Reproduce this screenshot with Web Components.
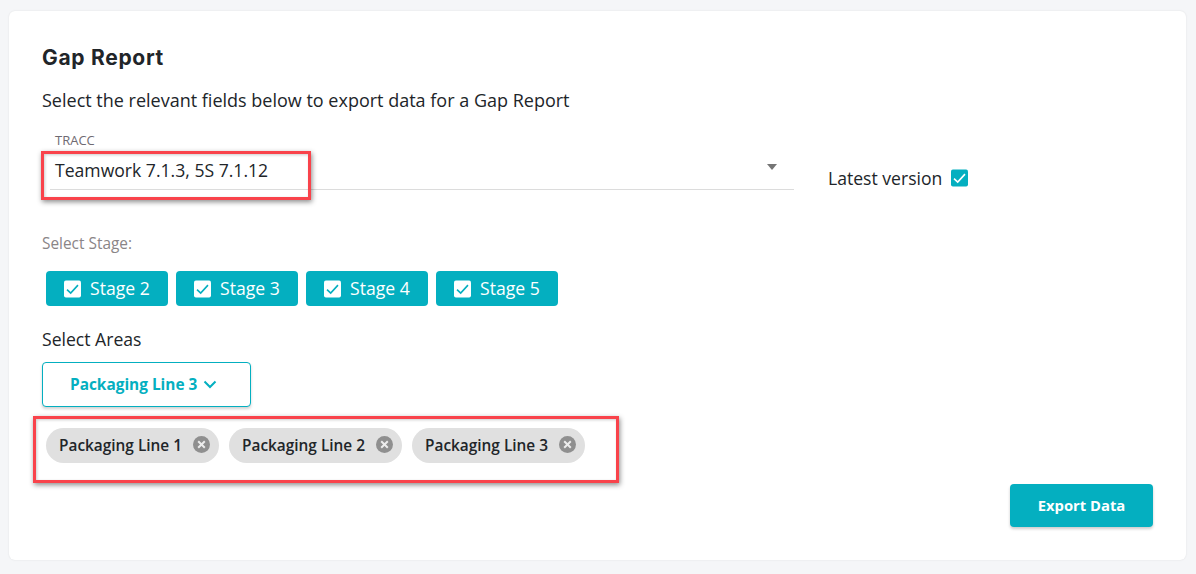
<!DOCTYPE html>
<html>
<head>
<meta charset="utf-8">
<title>Gap Report</title>
<style>
    html, body { margin: 0; padding: 0; height: 100%; }
    body { background: #f5f6f8; font-family: "Open Sans", sans-serif; color: #212529; overflow: hidden; }
</style>
</head>
<body>
<gap-report></gap-report>
<script>
const CHECK = `<svg viewBox="0 0 18 18" width="17" height="18"><rect width="18" height="18" rx="2" fill="var(--box, #fff)"/><path d="M3.2 9.6l3.9 3.7 7.7-8.4" fill="none" stroke="var(--tick, #04afc0)" stroke-width="1.7"/></svg>`;

class StageChip extends HTMLElement {
    connectedCallback() {
        this.attachShadow({ mode: 'open' });
        this.shadowRoot.innerHTML = `
            <style>
                :host {
                    display: inline-flex;
                    align-items: center;
                    gap: 9px;
                    width: 121.5px;
                    height: 35px;
                    box-sizing: border-box;
                    padding-left: 18px;
                    background: #04afc0;
                    border-radius: 4px;
                    color: #fff;
                    font-size: 17.6px;
                }
                svg { display: block; }
                span { display: block; margin-top: -1px; }
            </style>
            ${CHECK}<span><slot></slot></span>
        `;
    }
}

class AreaTag extends HTMLElement {
    connectedCallback() {
        this.attachShadow({ mode: 'open' });
        this.shadowRoot.innerHTML = `
            <style>
                :host {
                    display: inline-flex;
                    align-items: center;
                    justify-content: space-between;
                    width: 173px;
                    height: 35px;
                    box-sizing: border-box;
                    padding: 0 9.5px 0 13px;
                    background: #e0e0e0;
                    border-radius: 18px;
                    color: #212529;
                    font-size: 15.4px;
                    font-weight: 600;
                    white-space: nowrap;
                }
                svg { display: block; margin-top: -2px; }
            </style>
            <slot></slot>
            <svg viewBox="0 0 17 17" width="17" height="17">
                <circle cx="8.5" cy="8.5" r="8.5" fill="#8f8f8f"/>
                <path d="M5.2 5.2l6.6 6.6M11.8 5.2l-6.6 6.6" stroke="#ececec" stroke-width="2"/>
            </svg>
        `;
    }
}

class TraccSelect extends HTMLElement {
    connectedCallback() {
        this.attachShadow({ mode: 'open' });
        this.shadowRoot.innerHTML = `
            <style>
                :host { display: block; width: 744px; height: 62px; box-sizing: border-box; border-bottom: 1px solid #dcdcdc; padding-left: 5px; }
                .label { font-size: 13px; line-height: 16px; color: #6f6a72; padding-top: 4px; }
                .row { display: flex; justify-content: space-between; align-items: center; padding-right: 17px; margin-top: 10px; }
                .value { font-size: 17.6px; line-height: 24px; color: #212529; }
                .caret { width: 0; height: 0; border-left: 5px solid transparent; border-right: 5px solid transparent; border-top: 6px solid #757575; margin-top: -6px; }
            </style>
            <div class="label">TRACC</div>
            <div class="row"><div class="value"><slot></slot></div><div class="caret"></div></div>
        `;
    }
}

class GapReport extends HTMLElement {
    connectedCallback() {
        this.attachShadow({ mode: 'open' });
        this.shadowRoot.innerHTML = `
            <style>
                :host { display: block; padding: 11px 10px 14px 9px; }
                .card {
                    position: relative;
                    height: 549px;
                    box-sizing: border-box;
                    padding: 33px 33px 0 33px;
                    background: #fff;
                    border-radius: 6px;
                    box-shadow: 0 0 2px rgba(0,0,0,0.1);
                }
                h1 { margin: 0; font: 700 21px/28px Inter, "Open Sans", sans-serif; letter-spacing: 0.7px; color: #212529; }
                .desc { margin-top: 16px; font-size: 18px; line-height: 24px; }
                .tracc-row { display: flex; align-items: flex-start; gap: 34px; margin-top: 16px; padding-left: 8px; }
                .latest { display: flex; align-items: center; gap: 9px; margin-top: 38px; font-size: 17.6px; line-height: 24px; }
                .latest svg { --box: #04afc0; --tick: #fff; display: block; }
                .stage-label { margin-top: 44px; font-size: 15.4px; line-height: 20px; color: #8a8587; }
                .stages { display: flex; gap: 8.5px; margin-top: 17px; padding-left: 4px; }
                .areas { margin-top: 21px; font-size: 17.6px; line-height: 24px; }
                .dropdown {
                    display: flex; align-items: center; gap: 6px;
                    width: 209px; height: 45px; box-sizing: border-box; margin-top: 11px; padding-left: 27px;
                    border: 1px solid #04afc0; border-radius: 4px; background: #fff;
                    color: #04afc0; font-size: 15.4px; font-weight: 700;
                    box-shadow: 0 2px 3px rgba(0,0,0,0.18);
                }
                .dropdown span { margin-top: -1px; }
                .tags { display: flex; gap: 10px; margin-top: 21px; padding-left: 4px; }
                .export {
                    position: absolute; right: 33px; bottom: 33px;
                    display: flex; align-items: center; justify-content: center;
                    width: 143px; height: 43px; padding-bottom: 2px; box-sizing: border-box;
                    background: #04afc0; border-radius: 4px; color: #fff;
                    font-size: 14.8px; font-weight: 700;
                    box-shadow: 0 2px 3px rgba(0,0,0,0.2);
                }
                .mark { position: absolute; box-sizing: border-box; border: 3px solid #f9434b; box-shadow: 1px 2px 5px rgba(0,0,0,0.45), inset 1px 1px 3px rgba(0,0,0,0.2); pointer-events: none; }
                .m1 { left: 32px; top: 140px; width: 270px; height: 49px; }
                .m2 { left: 24px; top: 405px; width: 586px; height: 67px; }
            </style>
            <div class="card">
                <h1>Gap Report</h1>
                <div class="desc">Select the relevant fields below to export data for a Gap Report</div>
                <div class="tracc-row">
                    <tracc-select>Teamwork 7.1.3, 5S 7.1.12</tracc-select>
                    <div class="latest">Latest version ${CHECK}</div>
                </div>
                <div class="stage-label">Select Stage:</div>
                <div class="stages">
                    <stage-chip>Stage 2</stage-chip>
                    <stage-chip>Stage 3</stage-chip>
                    <stage-chip>Stage 4</stage-chip>
                    <stage-chip>Stage 5</stage-chip>
                </div>
                <div class="areas">Select Areas</div>
                <div class="dropdown"><span>Packaging Line 3</span>
                    <svg viewBox="0 0 14 9" width="14" height="9"><path d="M1.5 1.5L7 7l5.5-5.5" fill="none" stroke="#04afc0" stroke-width="2"/></svg>
                </div>
                <div class="tags">
                    <area-tag>Packaging Line 1</area-tag>
                    <area-tag>Packaging Line 2</area-tag>
                    <area-tag>Packaging Line 3</area-tag>
                </div>
                <div class="export">Export Data</div>
                <div class="mark m1"></div>
                <div class="mark m2"></div>
            </div>
        `;
    }
}

customElements.define('stage-chip', StageChip);
customElements.define('area-tag', AreaTag);
customElements.define('tracc-select', TraccSelect);
customElements.define('gap-report', GapReport);
</script>
</body>
</html>
